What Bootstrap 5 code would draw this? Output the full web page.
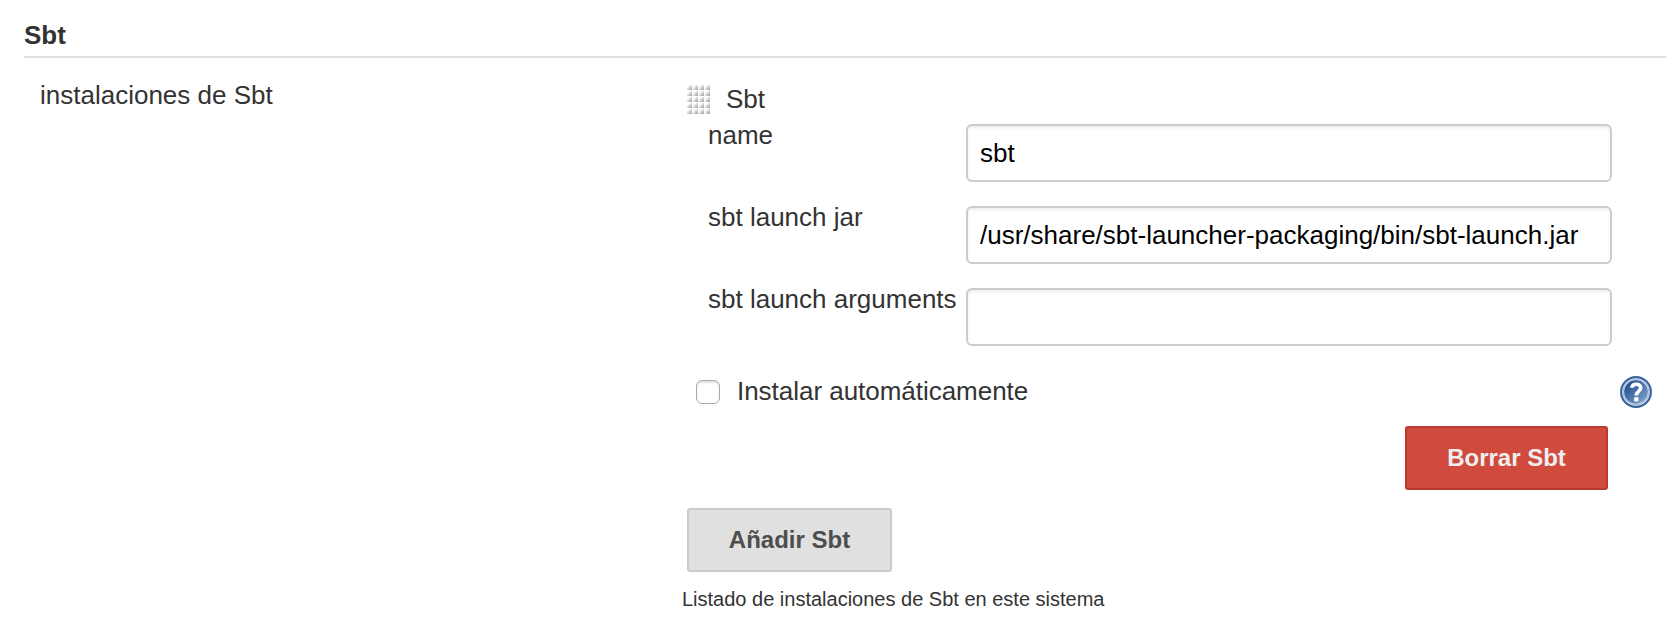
<!DOCTYPE html>
<html lang="es">
<head>
<meta charset="utf-8">
<meta name="viewport" content="width=device-width, initial-scale=1">
<title>Sbt</title>
<link href="https://cdn.jsdelivr.net/npm/bootstrap@5.3.0/dist/css/bootstrap.min.css" rel="stylesheet">
<style>
  body { font: 26px/30px "Liberation Sans", Arial, sans-serif; color: #333; background: #fff; overflow: hidden; }
  .config { padding: 20px 0 0 24px; }
  .section-title { font-size: 26px; line-height: 30px; height: 38px; border-bottom: 2px solid #dfdfdf; }
  .setting-name { width: 658px; padding: 22px 0 0 16px; }
  .setting-main { padding-top: 26px; }
  .tool-head { height: 36px; padding-left: 5px; }
  .grip { width: 24px; height: 30px; margin: 1px 15px 0 0; }
  .field-row { height: 82px; padding-left: 26px; }
  .field-row label { width: 258px; }
  .field-row .form-control { width: 646px; height: 58px; margin-top: 4px; padding: 0 12px; border: 2px solid #ccc; border-radius: 6px; font-size: 26px; line-height: 30px; color: #000; box-shadow: inset 0 2px 3px rgba(0,0,0,.07); }
  .auto-row { margin-top: 10px; height: 32px; padding: 0 14px 0 14px; }
  .auto-row .form-check-input { width: 24px; height: 24px; margin: 4px 17px 0 0; border: 1.5px solid #aaa; border-radius: 6px; box-shadow: inset 0 2px 2px rgba(0,0,0,.12); }
  .auto-row label { letter-spacing: -.03px; }
  .action { height: 64px; border-width: 2px; border-radius: 3px; font-size: 24px; line-height: 30px; font-weight: 700; padding: 0; }
  .action-delete { width: 203px; color: #eee; background: #d14a3e; border-color: #b93a2f; margin: 18px 58px 0 0; }
  .action-add { width: 205px; color: #4d4d4d; background: #e0e0e0; border-color: #cbcbcb; margin: 18px 0 0 5px; }
  .note { font-size: 20px; line-height: 24px; margin-top: 15px; }
</style>
</head>
<body>
<main class="config">
  <h1 class="section-title fw-bold m-0">Sbt</h1>
  <div class="d-flex">
    <div class="setting-name flex-shrink-0">instalaciones de Sbt</div>
    <div class="setting-main flex-grow-1">
      <div class="tool-head d-flex align-items-start">
        <svg class="grip" viewBox="0 0 24 30" aria-hidden="true">
          <defs>
            <linearGradient id="dot" x1="0" y1="0" x2="1" y2="1"><stop offset=".2" stop-color="#fff"/><stop offset="1" stop-color="#999"/></linearGradient>
            <pattern id="dots" width="6" height="6" patternUnits="userSpaceOnUse"><rect width="5" height="5" fill="url(#dot)"/></pattern>
          </defs>
          <rect width="24" height="30" fill="url(#dots)"/>
        </svg>
        <span>Sbt</span>
      </div>
      <div class="field-row d-flex align-items-start"><label for="name">name</label><input id="name" class="form-control" value="sbt"></div>
      <div class="field-row d-flex align-items-start"><label for="jar">sbt launch jar</label><input id="jar" class="form-control" value="/usr/share/sbt-launcher-packaging/bin/sbt-launch.jar"></div>
      <div class="field-row d-flex align-items-start"><label for="args">sbt launch arguments</label><input id="args" class="form-control"></div>
      <div class="auto-row d-flex align-items-start">
        <input class="form-check-input" type="checkbox" id="auto">
        <label for="auto">Instalar automáticamente</label>
        <svg class="ms-auto" width="32" height="32" viewBox="0 0 32 32" role="img" aria-label="Ayuda">
          <defs><linearGradient id="blue" x1="0" y1="0" x2="1" y2="1"><stop offset=".15" stop-color="#27518f"/><stop offset=".9" stop-color="#7c9fcc"/></linearGradient></defs>
          <circle cx="16" cy="16" r="14.9" fill="#dce6f2" stroke="#3c659f" stroke-width="2.2"/>
          <circle cx="16" cy="16" r="12.9" fill="none" stroke="#a3b9d6" stroke-width="1"/>
          <circle cx="16" cy="16" r="11.8" fill="url(#blue)"/>
          <path d="M11.7 11.8C12.1 9.2 14 8.2 16.2 8.2c2.6 0 4.5 1.4 4.5 3.7 0 3.4-4.4 3.6-4.4 7.5" fill="none" stroke="#fff" stroke-width="3.6"/>
          <rect x="14.2" y="21.2" width="4.2" height="4.2" fill="#fff"/>
        </svg>
      </div>
      <div class="d-flex justify-content-end"><button type="button" class="btn action action-delete">Borrar Sbt</button></div>
      <button type="button" class="btn action action-add d-block">Añadir Sbt</button>
      <div class="note">Listado de instalaciones de Sbt en este sistema</div>
    </div>
  </div>
</main>
<script src="https://cdn.jsdelivr.net/npm/bootstrap@5.3.0/dist/js/bootstrap.bundle.min.js"></script>
</body>
</html>
